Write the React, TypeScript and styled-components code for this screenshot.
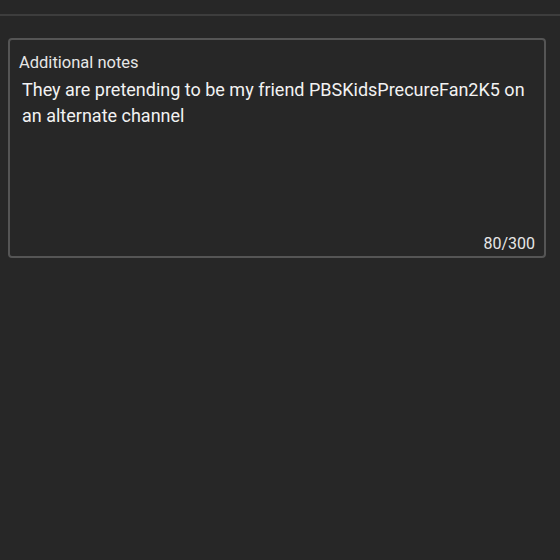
import React from "react";
import styled, { createGlobalStyle } from "styled-components";

const Global = createGlobalStyle`
  html, body { margin: 0; padding: 0; background: #272727; }
  body { font-family: Roboto, "Liberation Sans", sans-serif; }
`;

const Page = styled.div`
  width: 560px;
  height: 560px;
  background: #272727;
  display: flex;
  flex-direction: column;
`;

const TopBar = styled.div`
  height: 14px;
  border-bottom: 2px solid #3d3d3d;
`;

const Body = styled.div`
  padding: 22px 14px 0 8px;
`;

const Field = styled.div`
  box-sizing: border-box;
  height: 220px;
  border: 2px solid #555555;
  border-radius: 4px;
  padding: 13px 9px 3px 9px;
  display: flex;
  flex-direction: column;
`;

const Label = styled.div`
  font-size: 16.5px;
  line-height: 20px;
  color: #e6e6e6;
`;

const Notes = styled.div`
  margin-top: 4px;
  padding-left: 3px;
  font-size: 18px;
  line-height: 26px;
  color: #f2f2f2;
  flex: 1;
`;

const Counter = styled.div`
  align-self: flex-end;
  font-size: 16px;
  line-height: 18px;
  color: #e6e6e6;
`;

export default function App() {
  return (
    <Page>
      <Global />
      <TopBar />
      <Body>
        <Field>
          <Label>Additional notes</Label>
          <Notes>
            They are pretending to be my friend PBSKidsPrecureFan2K5 on an alternate channel
          </Notes>
          <Counter>80/300</Counter>
        </Field>
      </Body>
    </Page>
  );
}
